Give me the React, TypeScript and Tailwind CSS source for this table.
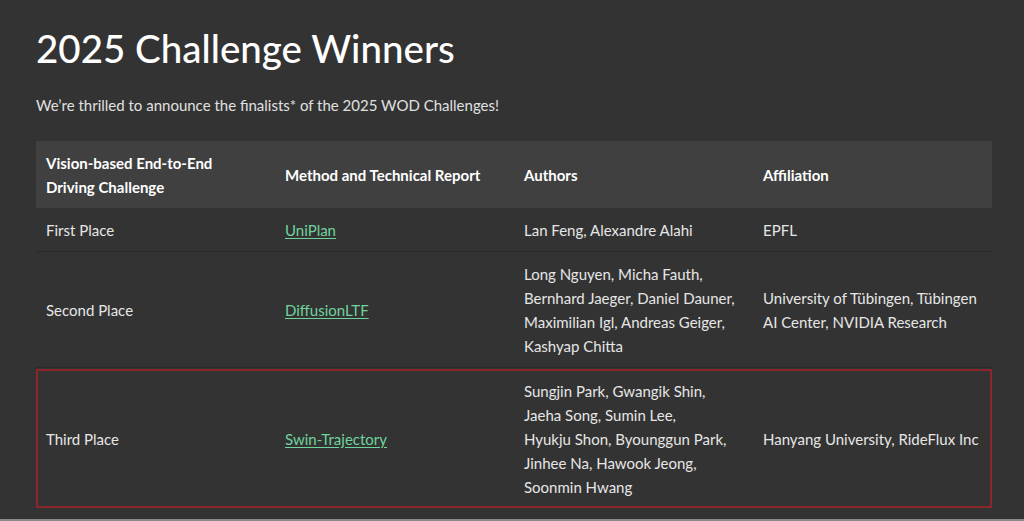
import React from 'react'

interface Winner {
  place: string
  method: string
  authors: string[]
  affiliation: string[]
  highlight?: boolean
}

const winners: Winner[] = [
  {
    place: 'First Place',
    method: 'UniPlan',
    authors: ['Lan Feng, Alexandre Alahi'],
    affiliation: ['EPFL'],
  },
  {
    place: 'Second Place',
    method: 'DiffusionLTF',
    authors: [
      'Long Nguyen, Micha Fauth,',
      'Bernhard Jaeger, Daniel Dauner,',
      'Maximilian Igl, Andreas Geiger,',
      'Kashyap Chitta',
    ],
    affiliation: ['University of Tübingen, Tübingen', 'AI Center, NVIDIA Research'],
  },
  {
    place: 'Third Place',
    method: 'Swin-Trajectory',
    authors: [
      'Sungjin Park, Gwangik Shin,',
      'Jaeha Song, Sumin Lee,',
      'Hyukju Shon, Byounggun Park,',
      'Jinhee Na, Hawook Jeong,',
      'Soonmin Hwang',
    ],
    affiliation: ['Hanyang University, RideFlux Inc'],
    highlight: true,
  },
]

export default function App() {
  return (
    <div
      className="h-[521px] overflow-hidden bg-[#333333] text-[#e6e6e6] border-b-2 border-[#8a8a8a]"
      style={{ fontFamily: 'Lato, "Noto Sans", sans-serif' }}
    >
      <div className="pl-9 pr-8 pt-[22px]">
        <h1 className="text-[38.5px] leading-[52px] font-medium text-white">
          2025 Challenge Winners
        </h1>
        <p className="mt-[21px] text-[15px] leading-5 text-[#e0e0e0]">
          We’re thrilled to announce the finalists* of the 2025 WOD Challenges!
        </p>

        {/* Table */}
        <div className="mt-[26px] w-[956px] text-[15px] leading-6 whitespace-nowrap">
          <div className="grid grid-cols-4 bg-[#404040] font-bold text-white">
            <div className="px-2.5 py-[9.5px]">
              Vision-based End-to-End
              <br />
              Driving Challenge
            </div>
            <div className="px-2.5 py-[9.5px] flex items-center">Method and Technical Report</div>
            <div className="px-2.5 py-[9.5px] flex items-center">Authors</div>
            <div className="px-2.5 py-[9.5px] flex items-center">Affiliation</div>
          </div>

          {winners.map((w) => (
            <div
              key={w.place}
              className={
                w.highlight
                  ? 'grid grid-cols-4 outline-2 outline-[#8b262c] -outline-offset-2 mt-px'
                  : 'grid grid-cols-4 border-b border-[#2a2a2a]'
              }
            >
              <div className="px-2.5 py-[9.5px] flex items-center">{w.place}</div>
              <div className="px-2.5 py-[9.5px] flex items-center">
                <a href="#" className="text-[#6fd39c] underline underline-offset-2">
                  {w.method}
                </a>
              </div>
              <div className="px-2.5 py-[9.5px]">
                {w.authors.map((a) => (
                  <div key={a}>{a}</div>
                ))}
              </div>
              <div className="px-2.5 py-[9.5px] flex flex-col justify-center">
                {w.affiliation.map((a) => (
                  <div key={a}>{a}</div>
                ))}
              </div>
            </div>
          ))}
        </div>
      </div>
    </div>
  )
}
